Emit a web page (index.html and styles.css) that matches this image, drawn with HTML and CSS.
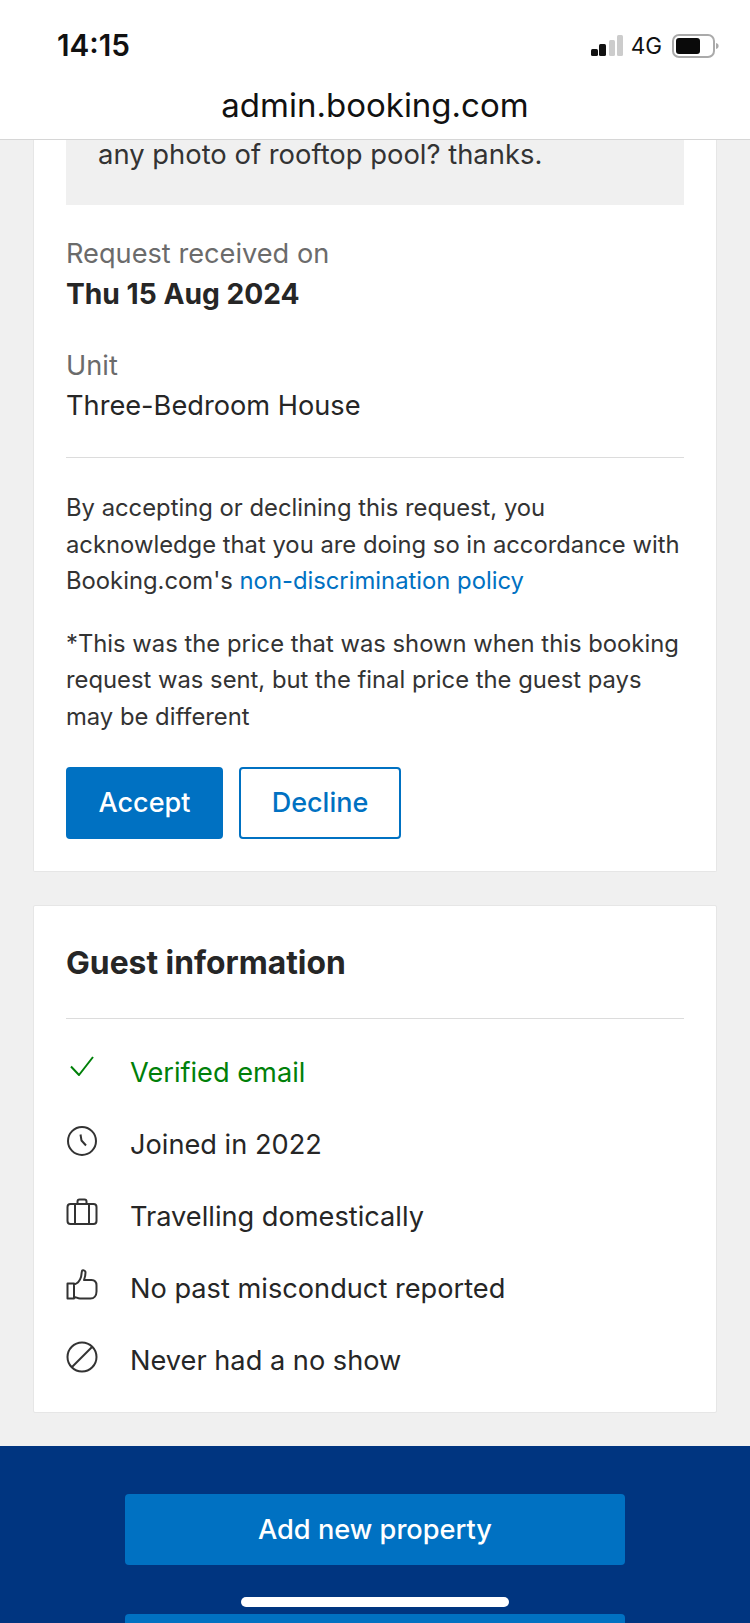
FILE: index.html
```html
<!DOCTYPE html>
<html lang="en">
<head>
    <meta charset="utf-8" />
    <title>admin.booking.com</title>
    <link rel="stylesheet" href="styles.css">
</head>
<body>

    <div id="header">
        <div class="status">
            <span class="time">14:15</span>
            <div class="status-icons">
                <svg width="32" height="22" viewBox="0 0 32 22">
                    <rect x="0" y="14" width="7" height="7" rx="1.5" fill="#111" />
                    <rect x="8" y="9" width="7" height="12" rx="1.5" fill="#111" />
                    <rect x="18" y="5" width="6" height="16" rx="1.5" fill="#ccc" />
                    <rect x="26" y="0" width="6" height="21" rx="1.5" fill="#ccc" />
                </svg>
                <span class="network">4G</span>
                <svg width="48" height="24" viewBox="0 0 48 24">
                    <rect x="1" y="1" width="41" height="22" rx="6" fill="none" stroke="#aaa" stroke-width="2" />
                    <rect x="4" y="4" width="24" height="16" rx="3" fill="#0a0a0a" />
                    <path d="M44 9c3.500 .5 3.500 5.500 0 6z" fill="#aaa" />
                </svg>
            </div>
        </div>
        <div class="address">admin.booking.com</div>
    </div>

    <div id="main">
        <div class="card first">
            <div class="quote">any photo of rooftop pool? thanks.</div>

            <div class="field">
                <div class="label">Request received on</div>
                <div class="value bold">Thu 15 Aug 2024</div>
            </div>
            <div class="field">
                <div class="label">Unit</div>
                <div class="value">Three-Bedroom House</div>
            </div>

            <hr />

            <p class="note">By accepting or declining this request, you acknowledge that you are doing so in accordance with Booking.com's <a href="#">non-discrimination policy</a></p>
            <p class="note">*This was the price that was shown when this booking request was sent, but the final price the guest pays may be different</p>

            <div class="actions">
                <a class="btn primary" href="#">Accept</a>
                <a class="btn outline" href="#">Decline</a>
            </div>
        </div>

        <div class="card last">
            <h2>Guest information</h2>
            <hr />
            <ul class="facts">
                <li class="ok">
                    <svg class="icon" viewBox="0 0 32 32"><path d="M5 13.500l8 8.500L27 4" /></svg>
                    Verified email
                </li>
                <li>
                    <svg class="icon" viewBox="0 0 32 32"><circle cx="16" cy="16" r="14" /><path d="M14.500 9.500l1 6 4.500 5" /></svg>
                    Joined in 2022
                </li>
                <li>
                    <svg class="icon" viewBox="0 0 32 32"><rect x="1.500" y="7" width="29" height="20" rx="3" /><path d="M9 7v20M23 7v20M11.500 7V4.500A2 2 0 0 1 13.500 2.500h5a2 2 0 0 1 2 2V7" /></svg>
                    Travelling domestically
                </li>
                <li>
                    <svg class="icon" viewBox="0 0 32 32"><path d="M1.500 14.500H8v15H1.500zM8 15.500c3.500-1 6-4 7-7.500.6-2.200.5-4.500 1-6 .5-1.200 3.500-1 3.500 1.500 0 2.500-.5 5-1.500 7.500h7.500c3 0 5 2 5 5.500v6c0 4-2.500 7-6 7H14c-2.500 0-4-1.500-6-1.500" /></svg>
                    No past misconduct reported
                </li>
                <li>
                    <svg class="icon" viewBox="0 0 32 32"><circle cx="16" cy="16" r="14.500" /><path d="M6 26L26 6" /></svg>
                    Never had a no show
                </li>
            </ul>
        </div>
    </div>

    <div id="footer">
        <a class="footer-btn" href="#">Add new property</a>
        <a class="footer-btn" href="#"></a>
    </div>

    <div class="home-bar"></div>

</body>
</html>
```

FILE: styles.css
```css
html, body {
    margin: 0;
    padding: 0;
}

body {
    position: relative;
    height: 1623px;
    overflow: hidden;
    background: #f0f0f0;
    color: #262626;
    font: 27.200px/40px Inter, 'Open Sans', sans-serif;
}

a {
    color: #0071c2;
    text-decoration: none;
}

#header {
    height: 139px;
    background: #fff;
    border-bottom: 1px solid #d6d6d6;
    color: #111;
}

.status {
    display: flex;
    justify-content: space-between;
    align-items: center;
    height: 44px;
    padding: 24px 30px 0 57px;
}

.time {
    font-size: 29.700px;
    font-weight: 600;
    margin-bottom: 2px;
}

.status-icons {
    display: flex;
    align-items: center;
    gap: 8px;
}

.network {
    font-size: 22.500px;
    font-weight: 400;
    margin-right: 2px;
}

.address {
    margin-top: 15px;
    text-align: center;
    font-size: 33px;
    line-height: 44px;
}

#main {
    padding: 0 33px;
}

.card {
    background: #fff;
    border: 1px solid #e6e6e6;
    border-radius: 2px;
    padding: 0 32px;
    margin-bottom: 33px;
}

.card.first {
    border-top: 0;
    border-radius: 0 0 2px 2px;
    padding-bottom: 32px;
}

.quote {
    height: 65px;
    padding: 0 32px;
    background: #f0f0f0;
    font-size: 27.400px;
    line-height: 28px;
    color: #333;
}

.field {
    margin-top: 29px;
}

.field + .field {
    margin-top: 32px;
}

.label,
.value {
    line-height: 40px;
}

.label {
    color: #6b6b6b;
}

.value.bold {
    font-size: 28.200px;
    font-weight: 700;
}

hr {
    height: 1px;
    margin: 0;
    border: 0;
    background: #dcdcdc;
}

.first hr {
    margin-top: 31px;
}

.note {
    margin: 0;
    font-size: 23.800px;
    line-height: 36.500px;
    color: #333;
}

.first hr + .note {
    margin-top: 32px;
}

.note + .note {
    margin-top: 26px;
}

.actions {
    display: flex;
    gap: 16px;
    margin-top: 32px;
}

.btn {
    box-sizing: border-box;
    height: 72px;
    line-height: 68px;
    text-align: center;
    font-size: 27px;
    font-weight: 500;
    border: 2px solid #0071c2;
    border-radius: 4px;
}

.btn.primary {
    width: 157px;
    background: #0071c2;
    color: #fff;
}

.btn.outline {
    width: 162px;
    background: #fff;
}

h2 {
    margin: 0;
    padding: 36px 0 34px;
    font-size: 31.800px;
    line-height: 42px;
    font-weight: 700;
}

.facts {
    list-style: none;
    margin: 18px 0 0;
    padding: 0 0 15px;
}

.facts li {
    display: flex;
    align-items: center;
    gap: 32px;
    height: 72px;
}

.facts li.ok {
    color: #008009;
}

.icon {
    flex: none;
    width: 32px;
    height: 32px;
    margin-top: -8px;
    fill: none;
    stroke: #333;
    stroke-width: 2;
    stroke-linejoin: round;
}

.ok .icon {
    stroke: #008009;
}

#footer {
    display: flex;
    flex-direction: column;
    align-items: center;
    gap: 49px;
    background: #003580;
    padding-top: 48px;
    height: 200px;
}

.footer-btn {
    flex: none;
    width: 500px;
    height: 71px;
    line-height: 72px;
    background: #0071c2;
    border-radius: 4px;
    color: #fff;
    font-size: 27.200px;
    font-weight: 500;
    text-align: center;
}

.home-bar {
    position: absolute;
    left: 241px;
    top: 1597px;
    width: 268px;
    height: 10px;
    border-radius: 5px;
    background: #fff;
}
```
